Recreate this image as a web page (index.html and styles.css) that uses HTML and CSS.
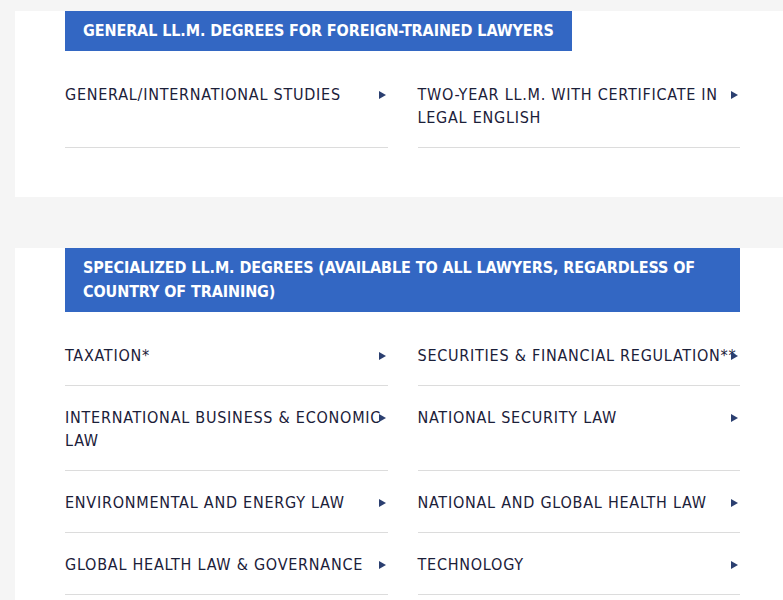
FILE: index.html
```html
<!DOCTYPE html>
<html lang="en">
<head>
<meta charset="UTF-8">
<meta name="viewport" content="width=device-width, initial-scale=1.0">
<title>LL.M. Degrees</title>
<link rel="stylesheet" href="styles.css">
</head>
<body>
<div class="panel">
    <h2 class="section-title">General LL.M. Degrees for Foreign-Trained Lawyers</h2>
    <div class="degree-grid">
        <a class="degree" href="#">General/International Studies<span class="arrow"></span></a>
        <a class="degree" href="#">Two-Year LL.M. with Certificate in Legal English<span class="arrow"></span></a>
    </div>
</div>

<div class="panel">
    <h2 class="section-title">Specialized LL.M. Degrees (available to all lawyers, regardless of country of training)</h2>
    <div class="degree-grid">
        <a class="degree" href="#">Taxation*<span class="arrow"></span></a>
        <a class="degree" href="#">Securities &amp; Financial Regulation**<span class="arrow"></span></a>
        <a class="degree" href="#">International Business &amp; Economic Law<span class="arrow"></span></a>
        <a class="degree" href="#">National Security Law<span class="arrow"></span></a>
        <a class="degree" href="#">Environmental and Energy Law<span class="arrow"></span></a>
        <a class="degree" href="#">National and Global Health Law<span class="arrow"></span></a>
        <a class="degree" href="#">Global Health Law &amp; Governance<span class="arrow"></span></a>
        <a class="degree" href="#">Technology<span class="arrow"></span></a>
    </div>
</div>
</body>
</html>
```

FILE: styles.css
```css
body {
    background: #f5f5f5;
    margin: 0;
    padding-top: 11px;
    font-family: "DejaVu Sans Condensed", "Liberation Sans", sans-serif;
}
.panel {
    background: #fff;
    margin-left: 15px;
    padding: 0 43px 49px 50px;
}
.panel + .panel {
    margin-top: 51px;
}
.section-title {
    display: inline-block;
    margin: 0;
    padding: 8px 18px;
    background: #3367c3;
    color: #fff;
    font-size: 16px;
    font-weight: bold;
    line-height: 24px;
    letter-spacing: -0.1px;
    text-transform: uppercase;
}
.degree-grid {
    display: grid;
    grid-template-columns: 1fr 1fr;
    column-gap: 30px;
    margin-top: 12px;
}
.degree {
    position: relative;
    display: block;
    padding: 20px 0 18px;
    border-bottom: 1px solid #dcdcdc;
    color: #1b2039;
    font-size: 16px;
    line-height: 23px;
    letter-spacing: 0.75px;
    text-decoration: none;
    text-transform: uppercase;
}
.arrow {
    position: absolute;
    top: 28px;
    right: 2px;
    width: 0;
    height: 0;
    border-left: 7px solid #2b3f70;
    border-top: 4px solid transparent;
    border-bottom: 4px solid transparent;
}
```
